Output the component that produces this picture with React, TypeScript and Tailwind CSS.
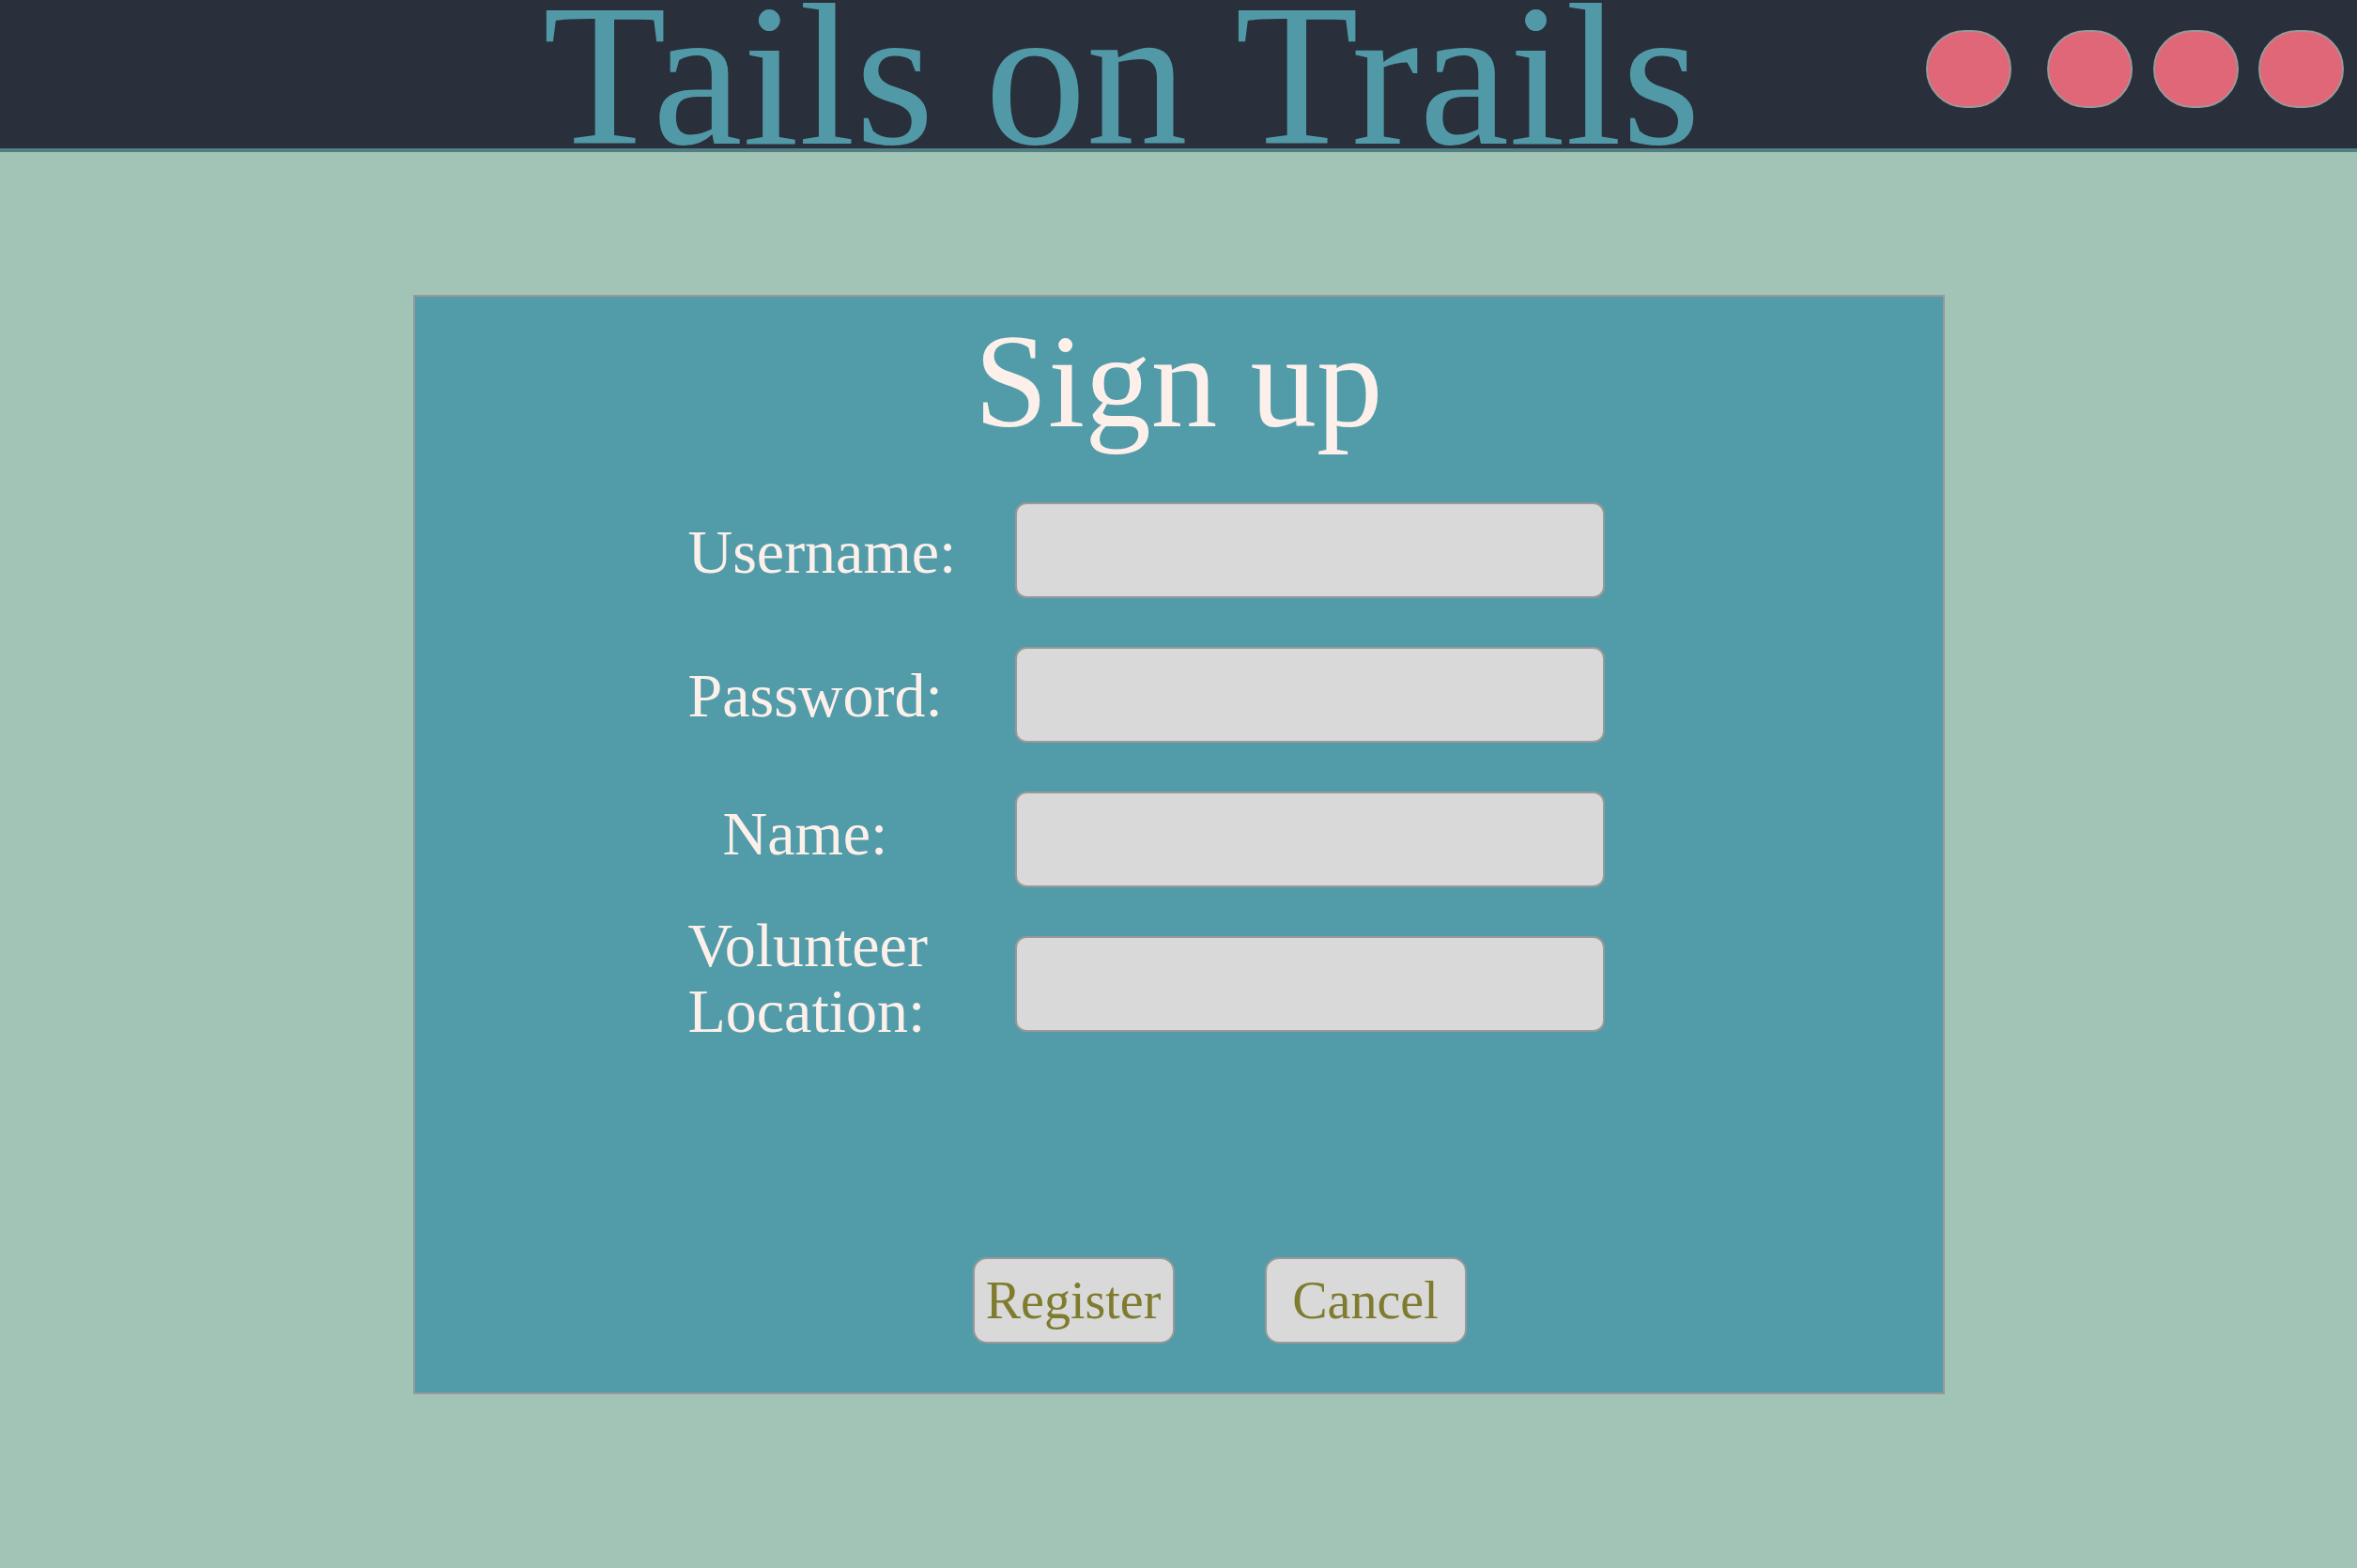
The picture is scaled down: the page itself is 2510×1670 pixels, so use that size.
import React from "react";

const Field = ({ label, extra }: { label: React.ReactNode; extra: string }) => (
  <div className="flex items-center h-[102px] pl-[291px]">
    <div className={`w-[348px] shrink-0 text-[66px] leading-[70px] text-[#fdf0ea] whitespace-nowrap ${extra}`}>{label}</div>
    <input
      className="w-[628px] h-[102px] shrink-0 rounded-[12px] border-2 border-[#999999] bg-[#d9d9d9] outline-none"
      type="text"
    />
  </div>
);

export default function App() {
  return (
    <div
      className="w-full min-h-[1670px] bg-[#a2c4b7] overflow-hidden"
      style={{ fontFamily: '"Liberation Serif", "Times New Roman", serif' }}
    >
      <header className="h-[162px] bg-[#29303c] border-b-4 border-[#527f84] flex items-start overflow-hidden">
        <h1 className="ml-[578px] mt-[6px] text-[216px] leading-[150px] text-[#5299a7] whitespace-nowrap font-normal">
          Tails on Trails
        </h1>
        <div className="ml-auto mr-[14px] mt-[32px] flex shrink-0">
          <div className="w-[91px] h-[83px] shrink-0 rounded-full border-2 border-[#999999] bg-[#e06777] mr-[38px]" />
          <div className="w-[91px] h-[83px] shrink-0 rounded-full border-2 border-[#999999] bg-[#e06777] mr-[22px]" />
          <div className="w-[91px] h-[83px] shrink-0 rounded-full border-2 border-[#999999] bg-[#e06777] mr-[21px]" />
          <div className="w-[91px] h-[83px] shrink-0 rounded-full border-2 border-[#999999] bg-[#e06777]" />
        </div>
      </header>

      <main className="mt-[152px] mx-auto w-[1631px] h-[1171px] border-2 border-[#999999] bg-[#529ca9] flex flex-col">
        <h2 className="mt-[20px] text-center text-[141px] leading-[141px] text-[#fdf0ea] font-normal">Sign up</h2>
        <div className="mt-[58px] flex flex-col gap-[52px]">
          <Field label="Username:" extra="mt-[4px]" />
          <Field label="Password:" extra="mt-[2px]" />
          <Field label={<span className="pl-[37px]">Name:</span>} extra="mb-[12px]" />
          <Field
            label={
              <>
                Volunteer
                <br />
                Location:
              </>
            }
            extra="mb-[12px]"
          />
        </div>
        <div className="mt-[240px] pl-[594px] flex gap-[96px]">
          <button className="w-[215px] h-[92px] rounded-[15px] border-2 border-[#999999] bg-[#d9d9d9] text-[56px] text-[#7f7b2f] leading-none">
            Register
          </button>
          <button className="w-[215px] h-[92px] rounded-[15px] border-2 border-[#999999] bg-[#d9d9d9] text-[56px] text-[#7f7b2f] leading-none">
            Cancel
          </button>
        </div>
      </main>
    </div>
  );
}
